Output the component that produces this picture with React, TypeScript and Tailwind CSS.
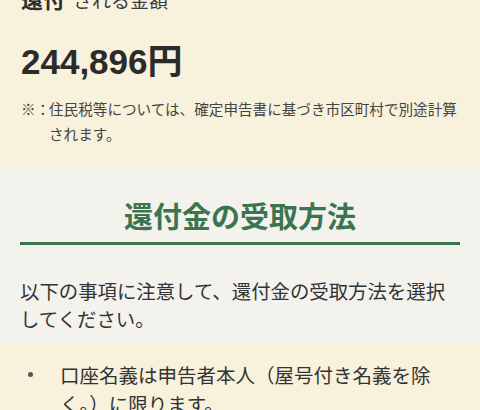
const jp = { fontFamily: '"Liberation Sans", "Noto Sans CJK JP", sans-serif' };

export default function App() {
  return (
    <div className="w-[480px] h-[410px] overflow-hidden text-[#333]" style={jp}>
      {/* 還付される金額 */}
      <section className="bg-[#f8f1dc] px-[21px] pb-[18px]">
        <div className="-mt-[10px] leading-[22px] whitespace-nowrap">
          <span className="text-[22px] font-bold text-[#2e2e2e]">還付</span>
          <span className="text-[19px] ml-[8px] text-[#3a3a3a]">される金額</span>
        </div>
        <div className="mt-[30px] text-[35px] leading-[35px] font-bold text-[#2b2b2b]">
          244,896円
        </div>
        <div className="mt-[19px] flex text-[14.6px] leading-[25px] text-[#444]">
          <span className="w-[28px] shrink-0">※：</span>
          <span>住民税等については、確定申告書に基づき市区町村で別途計算されます。</span>
        </div>
      </section>

      {/* 還付金の受取方法 */}
      <section className="bg-[#f3f2ed] px-[20px] pt-[34px] pb-[10px]">
        <h2 className="border-b-[3px] border-[#3d7450] pb-[6px] text-center text-[29px] leading-[36px] font-bold text-[#3b7550]">
          還付金の受取方法
        </h2>
        <p className="mt-[33px] text-[19.4px] leading-[28px] text-[#333]">
          以下の事項に注意して、還付金の受取方法を選択してください。
        </p>
      </section>

      <section className="bg-[#f8f1dc] pl-[20px] pr-[40px] pt-[18px] pb-[20px]">
        <ul>
          <li className="flex text-[19.5px] leading-[29px] text-[#333]">
            <span className="w-[40px] shrink-0 pl-[8px] pt-[10px]">
              <span className="block w-[5px] h-[5px] rounded-full bg-[#555]" />
            </span>
            <span>口座名義は申告者本人（屋号付き名義を除く。）に限ります。</span>
          </li>
        </ul>
      </section>
    </div>
  );
}
